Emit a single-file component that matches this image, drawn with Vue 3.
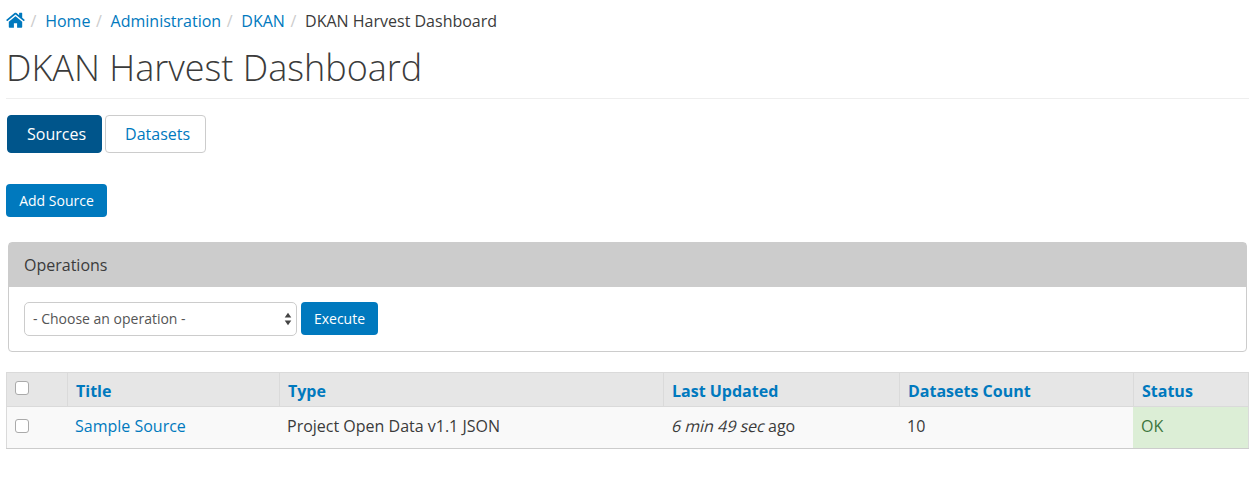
<script setup>
import { ref } from 'vue'

const crumbs = ['Home', 'Administration', 'DKAN']
const columns = ['Title', 'Type', 'Last Updated', 'Datasets Count', 'Status']
const rows = ref([
  { title: 'Sample Source', type: 'Project Open Data v1.1 JSON', age: '6 min 49 sec', count: 10, status: 'OK' },
])
</script>

<template>
  <main class="page">
    <nav class="breadcrumb">
      <a class="home" href="#" aria-label="Front page">
        <svg width="19" height="16" viewBox="0.5 0 19 16">
          <path d="M10 4.3 3.3 9.800v5.300c0 .4.3.7.7.7h4.400v-4.500h3.200v4.500H16c.4 0 .7-.3.7-.7V9.800z" />
          <path d="M19.100 7.700 16.700 5.700V1.200c0-.2-.2-.4-.4-.4H14c-.2 0-.4.2-.4.4v2.100L11 1.100c-.6-.5-1.400-.5-2 0L.9 7.700c-.2.100-.2.400-.1.500l.7.800c.1.200.4.200.5.100L10 2.600l8 6.500c.2.100.4.100.5-.1l.7-.8c.1-.1.100-.4-.1-.5z" />
        </svg>
      </a>
      <template v-for="crumb in crumbs" :key="crumb">
        <span class="slash">/</span><a href="#">{{ crumb }}</a>
      </template>
      <span class="slash">/</span><span>DKAN Harvest Dashboard</span>
    </nav>
    <h1>DKAN Harvest Dashboard</h1>

    <div class="tabs">
      <a class="tab active" href="#">Sources</a>
      <a class="tab" href="#">Datasets</a>
    </div>

    <button class="btn add">Add Source</button>

    <section class="panel">
      <header>Operations</header>
      <div class="panel-body">
        <div class="select" role="combobox">
          <span>- Choose an operation -</span>
          <svg width="8" height="14" viewBox="0 0 8 14">
            <path d="M4 .8 7.300 5.500H.7zM4 13.200.7 8.500h6.600z" />
          </svg>
        </div>
        <button class="btn execute">Execute</button>
      </div>
    </section>

    <table>
      <colgroup>
        <col class="c-check" /><col class="c-title" /><col class="c-type" />
        <col class="c-updated" /><col class="c-count" /><col class="c-status" />
      </colgroup>
      <thead>
        <tr>
          <th><input type="checkbox" class="check" /></th>
          <th v-for="column in columns" :key="column"><a href="#">{{ column }}</a></th>
        </tr>
      </thead>
      <tbody>
        <tr v-for="row in rows" :key="row.title">
          <td><input type="checkbox" class="check" /></td>
          <td><a href="#">{{ row.title }}</a></td>
          <td>{{ row.type }}</td>
          <td><em>{{ row.age }}</em> ago</td>
          <td>{{ row.count }}</td>
          <td class="ok">{{ row.status }}</td>
        </tr>
      </tbody>
    </table>
  </main>
</template>

<style>
body {
  background: #fff;
}
</style>

<style scoped>
.page {
  box-sizing: border-box;
  padding: 9px 8px 0 6px;
  font: 16px/24px "Open Sans", "Noto Sans", sans-serif;
  color: #3b3b3b;
}
a {
  color: #0079be;
  text-decoration: none;
}
.breadcrumb {
  display: flex;
  height: 24px;
}
.home {
  width: 19px;
  padding-top: 2.500px;
}
.home svg {
  display: block;
  fill: #0079be;
}
.slash {
  box-sizing: border-box;
  width: 20.200px;
  padding-left: 5.500px;
  color: #ccc;
}
h1 {
  box-sizing: border-box;
  height: 66px;
  margin: 0;
  padding-top: 15px;
  border-bottom: 1px solid #eee;
  font-size: 36px;
  font-weight: 300;
  line-height: 40px;
}
.tabs {
  display: flex;
  gap: 3px;
  margin: 16px 0 31px 1px;
}
.tab {
  box-sizing: border-box;
  height: 38px;
  padding: 6px 15px 6px 19px;
  border: 1px solid #ccc;
  border-radius: 4px;
}
.tab.active {
  border-color: #00558b;
  background: #00558b;
  color: #fff;
}
.btn {
  display: block;
  box-sizing: border-box;
  height: 33px;
  padding: 0;
  border: 0;
  border-radius: 4px;
  background: #0079be;
  color: #fff;
  font: 14px/33px "Open Sans", "Noto Sans", sans-serif;
}
.add {
  width: 101px;
}
.execute {
  width: 77px;
}
.panel {
  box-sizing: border-box;
  height: 110px;
  margin: 25px 2px 20px;
  border: 1px solid #ccc;
  border-radius: 4px;
}
.panel header {
  height: 34px;
  padding: 10px 15px 0;
  background: #ccc;
}
.panel-body {
  display: flex;
  gap: 4px;
  padding: 15px;
}
.select {
  display: flex;
  box-sizing: border-box;
  align-items: center;
  justify-content: space-between;
  width: 273px;
  height: 34px;
  padding: 0 4px 0 8px;
  border: 1px solid #ccc;
  border-radius: 5px;
  color: #555;
  font-size: 14px;
}
.select svg {
  fill: #444;
}
table {
  width: 1243px;
  border-collapse: collapse;
  table-layout: fixed;
}
.c-check { width: 61px; }
.c-title { width: 212px; }
.c-type { width: 384px; }
.c-updated { width: 236px; }
.c-count { width: 234px; }
.c-status { width: 115px; }
th,
td {
  box-sizing: border-box;
  padding: 0 8px;
  text-align: left;
}
th {
  height: 34px;
  padding-top: 3px;
  border: 1px solid #dadada;
  background: #e6e6e6;
}
td {
  height: 42px;
  padding-bottom: 3px;
  padding-left: 7.500px;
  border-bottom: 1px solid #ccc;
  background: #f9f9f9;
}
td:first-child {
  padding-left: 8px;
  border-left: 1px solid #dadada;
}
td:last-child {
  border-right: 1px solid #dadada;
}
td em {
  display: inline-block;
  font-style: normal;
  transform: skewX(-14deg);
  transform-origin: 0 73%;
}
td.ok {
  border-left: 1px solid #dceed6;
  padding-left: 7px;
  background: #dceed6;
  color: #3c763d;
}
.check {
  display: block;
  box-sizing: border-box;
  width: 14px;
  height: 14px;
  margin: 0;
  border: 1px solid #aaa;
  border-radius: 3px;
  background: #fff;
  appearance: none;
}
th .check {
  margin-top: -7px;
}
</style>
